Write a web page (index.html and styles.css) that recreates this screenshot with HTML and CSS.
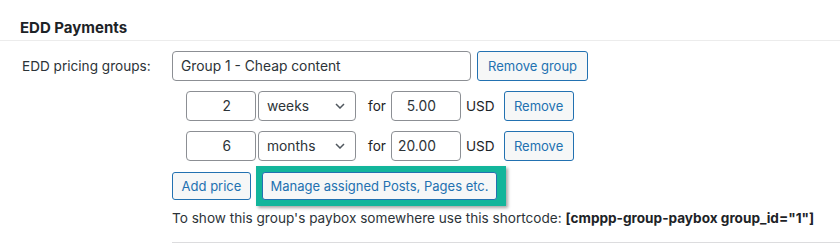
FILE: index.html
```html
<!DOCTYPE html>
<html>
<head>
    <title>EDD Payments</title>
    <link rel="stylesheet" href="styles.css">
</head>
<body>
    <h2 class="section-title">EDD Payments</h2>

    <div class="form-row">
        <label class="form-label" for="group-name">EDD pricing groups:</label>
        <div class="form-field">
            <div class="group-row">
                <input type="text" id="group-name" class="group-name" value="Group 1 - Cheap content">
                <button class="button">Remove group</button>
            </div>

            <div class="price-row">
                <input type="text" class="num" value="2">
                <span class="select-wrap">
                    <select class="period">
                        <option>weeks</option>
                        <option>months</option>
                    </select>
                    <svg class="chevron" width="10" height="6" viewBox="0 0 10 6"><path d="M1 1l4 4 4-4" fill="none" stroke="#50575e" stroke-width="1.5"/></svg>
                </span>
                <span class="for">for</span>
                <input type="text" class="price" value="5.00">
                <span class="currency">USD</span>
                <button class="button small">Remove</button>
            </div>

            <div class="price-row">
                <input type="text" class="num" value="6">
                <span class="select-wrap">
                    <select class="period">
                        <option>weeks</option>
                        <option selected>months</option>
                    </select>
                    <svg class="chevron" width="10" height="6" viewBox="0 0 10 6"><path d="M1 1l4 4 4-4" fill="none" stroke="#50575e" stroke-width="1.5"/></svg>
                </span>
                <span class="for">for</span>
                <input type="text" class="price" value="20.00">
                <span class="currency">USD</span>
                <button class="button small">Remove</button>
            </div>

            <div class="actions">
                <button class="button add">Add price</button>
                <span class="highlight">
                    <button class="button">Manage assigned Posts, Pages etc.</button>
                </span>
            </div>

            <p class="shortcode">To show this group's paybox somewhere use this shortcode: <strong>[cmppp-group-paybox group_id="1"]</strong></p>
        </div>
    </div>
</body>
</html>
```

FILE: styles.css
```css
body { margin: 0; background: #fff; color: #1d2327; font-family: Inter, "Noto Sans", sans-serif; font-size: 13.6px; }

.section-title { margin: 0; padding: 18px 0 2px 20px; font-size: 15px; line-height: 20px; font-weight: 700; border-bottom: 1px solid #ececec; }

.form-row { display: flex; padding-top: 10px; }
.form-label { width: 150px; padding-left: 22px; line-height: 30px; color: #2c3338; flex-shrink: 0; }
.form-field { flex: 1; border-bottom: 1px solid #dcdcde; padding-bottom: 14px; }

input, select, .button { font-family: inherit; box-sizing: border-box; margin: 0; }
input, select { height: 30px; border: 1px solid #8c8f94; border-radius: 4px; font-size: 13.8px; color: #2c3338; background: #fff; padding: 0 8px; }

.button { height: 30px; padding: 0 10px; border: 1px solid #2271b1; border-radius: 3px; background: #f6f7f7; color: #2271b1; font-size: 13px; }

.group-row { display: flex; align-items: center; gap: 6px; }
.group-name { width: 299px; }

.price-row { display: flex; align-items: center; margin: 10px 0 0 14px; }
.num { width: 70px; text-align: right; padding: 0 24px 0 4px; }
.select-wrap { position: relative; margin-left: 2px; }
.period { width: 98px; appearance: none; -webkit-appearance: none; padding-right: 24px; }
.chevron { position: absolute; right: 11px; top: 12px; pointer-events: none; }
.for { margin: 0 5px 0 12px; }
.price { width: 70px; text-align: right; padding: 0 24px 0 2px; }
.currency { margin: 0 9px 0 5px; }
.button.small { width: 70px; padding: 0; }

.actions { display: flex; align-items: center; gap: 5px; margin-top: 11px; }
.actions .button { height: 28px; }
.button.add { width: 79px; padding: 0; }
.highlight { display: flex; padding: 6px 9px 6px 6px; margin: -6px 0; background: #12b59b; box-shadow: 2px 2px 3px rgba(0, 0, 0, 0.35); }
.highlight .button { width: 235px; padding: 0; }

.shortcode { margin: 8px 0 0; line-height: 20px; color: #2c3338; }
.shortcode strong { color: #1d2327; }
```
